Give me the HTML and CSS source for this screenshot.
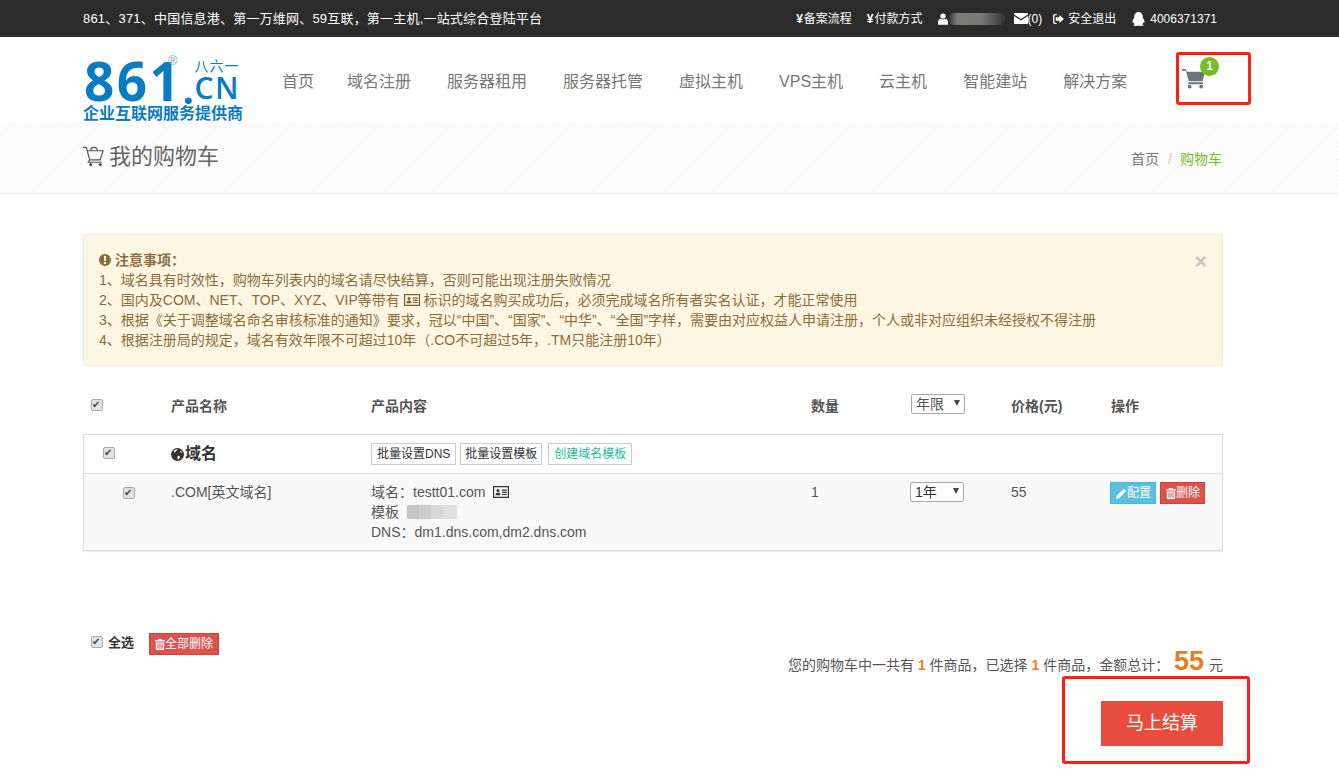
FILE: index.html
```html
<!DOCTYPE html>
<html lang="zh-CN">
<head>
    <meta charset="UTF-8">
    <meta name="viewport" content="width=device-width, initial-scale=1.0">
    <title>我的购物车</title>
    <link rel="stylesheet" href="styles.css">
</head>
<body>
    <svg class="sprite" width="0" height="0">
        <symbol id="i-cart" viewBox="0 0 24 22"><path d="M0 1h4l1 3h19l-2.500 10H7L4 3H0z M7 15h15v2H6z"/><circle cx="8" cy="19.500" r="2"/><circle cx="20" cy="19.500" r="2"/></symbol>
        <symbol id="i-user" viewBox="0 0 12 14"><circle cx="6" cy="3.500" r="3.200"/><path d="M0 14v-3c0-2.500 1.500-4 3-4.300 1.800 1.200 4.200 1.200 6 0 1.500.3 3 1.800 3 4.300v3z"/></symbol>
        <symbol id="i-mail" viewBox="0 0 14 11"><path d="M1 0h12a1 1 0 0 1 1 1v.5L7 6 0 1.500V1a1 1 0 0 1 1-1zM0 3l7 4.500L14 3v7a1 1 0 0 1-1 1H1a1 1 0 0 1-1-1z"/></symbol>
        <symbol id="i-out" viewBox="0 0 12 11"><path d="M4 0v1.500H2a.6.6 0 0 0-.5.500v7c0 .3.200.500.500.500h2V11H2a2 2 0 0 1-2-2V2a2 2 0 0 1 2-2z"/><path d="M7 1l5 4.500L7 10V7.500H3v-4h4z"/></symbol>
        <symbol id="i-qq" viewBox="0 0 14 15"><path d="M7 0c3 0 4.600 2.300 4.600 5v1.200c1 1.300 1.900 3 1.900 4.600 0 1-.4 1.200-1.200.3-.3 1-.8 1.600-1.300 2 1 .3 1.500.7 1.500 1.100 0 .5-1.500.8-3 .8-1 0-2-.2-2.500-.5-.5.3-1.500.5-2.500.5-1.500 0-3-.3-3-.8 0-.4.500-.8 1.500-1.100-.5-.4-1-1-1.300-2-.8.9-1.200.7-1.200-.3 0-1.600.9-3.300 1.900-4.600V5C2.400 2.300 4 0 7 0z"/></symbol>
        <symbol id="i-globe" viewBox="0 0 14 14"><circle cx="7" cy="7" r="7"/><path fill="#fff" d="M3 3c1-1 2.500-1.700 3.800-1.600.3.600-.2 1.100-.8 1.300-.7.300-.4 1-1.100 1.200-.7.200-.8.900-.3 1.300-.7-.1-1.300-.6-1.600-1.100-.2-.4-.2-.800 0-1.100zM8.500 8.300c.6.500 1.300.6 1.200 1.500-.1.800-.9 1.300-1.200 2.100-.3.500-.7.600-1.100.4-.3-.8-.1-1.500-.5-2.200-.3-.7.600-1.900 1.600-1.800zM10 2.600c1 .6 1.800 1.500 2.200 2.600-.7.200-1.300-.2-1.700-.7-.4-.5-.8-1.100-.5-1.900z"/></symbol>
        <symbol id="i-card" viewBox="0 0 16 12"><path fill-rule="evenodd" d="M0 0h16v12H0zM1.200 1.200v9.600h13.600V1.200z"/><circle cx="5" cy="4.600" r="1.500"/><path d="M2.500 9.200c0-1.800 1-2.800 2.500-2.800s2.500 1 2.500 2.800zM9 3.500h4.800v1.200H9zM9 5.700h4.800v1.200H9zM9 7.900h4.800v1.200H9z"/></symbol>
        <symbol id="i-pencil" viewBox="0 0 12 12"><path d="M8.500 0.800l2.700 2.700-7.500 7.500L0 12l1-3.700zM9.300 0l2.700 2.700"/></symbol>
        <symbol id="i-trash" viewBox="0 0 12 13"><path fill-rule="evenodd" d="M4 0h4l1 1.500h3V3H0V1.500h3zM1 4h10v8a1 1 0 0 1-1 1H2a1 1 0 0 1-1-1zM3 5.200v6.500h1.200V5.200zM5.400 5.200v6.500h1.200V5.200zM7.800 5.200v6.500H9V5.200z"/></symbol>
        <symbol id="i-warn" viewBox="0 0 12 12"><path fill-rule="evenodd" d="M6 0a6 6 0 1 0 0 12A6 6 0 0 0 6 0zM4.900 2h2.200l-.3 5H5.200zM4.900 8h2.200v2H4.900z"/></symbol>
        <symbol id="i-cart-line" viewBox="0 0 22 21"><path fill="none" stroke="currentColor" stroke-width="1.200" d="M0 1h3.500l3.500 13h11l3-9.500H5M7 14l-1.500 2.500h14M8 4.500c0-2 1.500-3.500 3.500-3.500s3.500 1.500 3.500 3.500"/><circle cx="8" cy="19" r="1.600"/><circle cx="18" cy="19" r="1.600"/></symbol>
    </svg>

    <div class="topbar">
        <div class="topbar-title">861、371、中国信息港、第一万维网、59互联，第一主机,一站式综合登陆平台</div>
        <div class="topbar-links">
            <a class="bold-link"><b>¥</b>备案流程</a>
            <a class="bold-link"><b>¥</b>付款方式</a>
            <span class="user"><svg class="ico i-user"><use href="#i-user"/></svg><span class="blur-name"></span></span>
            <span class="mail"><svg class="ico i-mail"><use href="#i-mail"/></svg>(0)</span>
            <a class="logout"><svg class="ico i-out"><use href="#i-out"/></svg>安全退出</a>
            <span class="qq"><svg class="ico i-qq"><use href="#i-qq"/></svg>4006371371</span>
        </div>
    </div>

    <header class="header">
        <div class="logo">
            <div class="logo-top">
                <span class="logo-num">861</span>
                <span class="logo-reg">®</span>
                <span class="logo-dot">.</span>
                <div class="logo-side">
                    <span class="logo-cn">八六一</span>
                    <span class="logo-en">CN</span>
                </div>
            </div>
            <div class="logo-slogan">企业互联网服务提供商</div>
        </div>
        <nav class="nav">
            <a>首页</a>
            <a>域名注册</a>
            <a>服务器租用</a>
            <a>服务器托管</a>
            <a>虚拟主机</a>
            <a>VPS主机</a>
            <a>云主机</a>
            <a>智能建站</a>
            <a>解决方案</a>
        </nav>
        <div class="cart">
            <svg class="ico i-cart"><use href="#i-cart"/></svg>
            <span class="cart-badge">1</span>
        </div>
    </header>

    <div class="crumbs">
        <h1 class="page-title"><svg class="ico i-cart-line"><use href="#i-cart-line"/></svg>我的购物车</h1>
        <div class="crumb-links"><a>首页</a><span class="sep">/</span><span class="current">购物车</span></div>
    </div>

    <main class="main">
        <div class="notice">
            <span class="notice-close">×</span>
            <div class="notice-title"><svg class="ico i-warn"><use href="#i-warn"/></svg>注意事项：</div>
            <div>1、域名具有时效性，购物车列表内的域名请尽快结算，否则可能出现注册失败情况</div>
            <div>2、国内及COM、NET、TOP、XYZ、VIP等带有 <svg class="ico i-card"><use href="#i-card"/></svg> 标识的域名购买成功后，必须完成域名所有者实名认证，才能正常使用</div>
            <div>3、根据《关于调整域名命名审核标准的通知》要求，冠以“中国”、“国家”、“中华”、“全国”字样，需要由对应权益人申请注册，个人或非对应组织未经授权不得注册</div>
            <div>4、根据注册局的规定，域名有效年限不可超过10年（.CO不可超过5年，.TM只能注册10年）</div>
        </div>

        <div class="row table-head">
            <div class="cell-check"><input type="checkbox" checked></div>
            <div>产品名称</div>
            <div>产品内容</div>
            <div>数量</div>
            <div><span class="select-wrap"><select class="select-head"><option>年限</option></select></span></div>
            <div>价格(元)</div>
            <div>操作</div>
        </div>

        <div class="group">
            <div class="row group-head">
                <div class="cell-check indent-1"><input type="checkbox" checked></div>
                <div class="group-name"><svg class="ico i-globe"><use href="#i-globe"/></svg>域名</div>
                <div class="group-btns">
                    <a class="btn-line btn-wide">批量设置DNS</a>
                    <a class="btn-line">批量设置模板</a>
                    <a class="btn-line btn-green">创建域名模板</a>
                </div>
            </div>
            <div class="row group-item">
                <div class="cell-check indent-2"><input type="checkbox" checked></div>
                <div>.COM[英文域名]</div>
                <div class="item-info">
                    <div>域名：testt01.com <svg class="ico i-card"><use href="#i-card"/></svg></div>
                    <div class="tpl">模板<span class="blur-tpl"></span></div>
                    <div>DNS：dm1.dns.com,dm2.dns.com</div>
                </div>
                <div>1</div>
                <div><span class="select-wrap"><select class="select-year"><option>1年</option></select></span></div>
                <div>55</div>
                <div class="item-ops">
                    <a class="btn-sm btn-info"><svg class="ico i-pencil"><use href="#i-pencil"/></svg>配置</a>
                    <a class="btn-sm btn-danger"><svg class="ico i-trash"><use href="#i-trash"/></svg>删除</a>
                </div>
            </div>
        </div>

        <div class="foot">
            <div class="foot-left">
                <input type="checkbox" checked>
                <span class="check-all">全选</span>
                <a class="btn-sm btn-danger btn-all"><svg class="ico i-trash"><use href="#i-trash"/></svg>全部删除</a>
            </div>
            <div class="foot-right">
                <div class="summary">您的购物车中一共有 <b>1</b> 件商品，已选择 <b>1</b> 件商品，金额总计： <b class="total">55</b> 元</div>
                <a class="checkout">马上结算</a>
            </div>
        </div>
    </main>

    <!-- red boxes drawn on the screenshot -->
    <div class="mark mark-cart"></div>
    <div class="mark mark-pay"></div>
</body>
</html>
```

FILE: styles.css
```css
/* General Styles */
* {
    box-sizing: border-box;
}

html, body {
    margin: 0;
    height: 780px;
    overflow: hidden;
}

body {
    position: relative;
    background-color: #fff;
    color: #555;
    font-family: "Liberation Sans", "Noto Sans CJK SC", sans-serif;
    font-size: 14px;
    line-height: 20px;
}

.sprite {
    position: absolute;
}

.ico {
    fill: currentColor;
    display: inline-block;
}

/* Top bar */
.topbar {
    height: 37px;
    padding: 0 122px 0 83px;
    display: flex;
    justify-content: space-between;
    align-items: center;
    background-color: #2b2b2b;
    color: #fff;
    font-size: 13px;
}

.topbar-title {
    letter-spacing: 0.2px;
}

.topbar-links {
    display: flex;
    align-items: center;
    font-size: 12px;
}

.topbar-links > * {
    display: flex;
    align-items: center;
}

.bold-link {
    margin-right: 15px;
}

.bold-link b {
    margin-right: 1px;
}

.i-user { width: 10px; height: 12px; margin-right: 1px; }
.i-mail { width: 14px; height: 11px; }
.i-out { width: 11px; height: 10px; margin-right: 4px; }
.i-qq { width: 13px; height: 14px; margin-right: 5px; }

.blur-name {
    width: 56px;
    height: 12px;
    border-radius: 5px;
    background: linear-gradient(90deg, #3a3a3a, #7d7d78 15%, #777 60%, #444 90%, #333);
}

.mail { margin-left: 9px; }
.logout { margin-left: 11px; }
.qq { margin-left: 16px; }

/* Header */
.header {
    height: 85px;
    padding-left: 83px;
    display: flex;
    align-items: flex-start;
}

.logo {
    width: 196px;
    padding-top: 22px;
    color: #0a7cc1;
}

.logo-top {
    position: relative;
    display: flex;
    height: 44px;
}

.logo-num {
    padding-left: 1px;
    font-family: "Open Sans", sans-serif;
    font-weight: 700;
    font-size: 53px;
    line-height: 44px;
    letter-spacing: 2.5px;
}

.logo-reg {
    position: absolute;
    left: 85px;
    top: -4px;
    font-size: 13px;
    line-height: 12px;
    color: #6db0dc;
}

.logo-dot {
    font-family: "Open Sans", sans-serif;
    font-weight: 700;
    font-size: 40px;
    line-height: 44px;
    margin-top: 8px;
    height: 36px;
    width: 12px;
}

.logo-side {
    display: flex;
    flex-direction: column;
    width: 46px;
    margin-top: -1px;
}

.logo-cn {
    font-size: 14px;
    line-height: 16px;
    letter-spacing: 1px;
}

.logo-en {
    font-family: "Open Sans", sans-serif;
    font-weight: 600;
    font-size: 30px;
    line-height: 28px;
    letter-spacing: 1.5px;
}

.logo-slogan {
    font-size: 16px;
    line-height: 18px;
    font-weight: 700;
    white-space: nowrap;
    width: 162px;
    margin-top: 2px;
}

.nav {
    display: flex;
    gap: 36px;
    width: 897px;
    padding-top: 35px;
    font-size: 16px;
    line-height: 20px;
    color: #777;
}

.nav a:first-child {
    margin: 0 -3px 0 3px;
}

.cart {
    position: relative;
    margin: 31px 0 0 6px;
    width: 40px;
    color: #6c757d;
}

.i-cart {
    width: 23px;
    height: 21px;
}

.cart-badge {
    position: absolute;
    left: 18px;
    top: -11px;
    width: 19px;
    height: 19px;
    border-radius: 50%;
    background-color: #76bb2a;
    color: #fff;
    font-size: 12px;
    font-weight: 700;
    line-height: 19px;
    text-align: center;
}

/* Breadcrumb band */
.crumbs {
    height: 72px;
    padding: 0 117px 0 83px;
    display: flex;
    justify-content: space-between;
    align-items: center;
    border-bottom: 1px solid #eee;
    background-color: #fafafa;
    background-image: repeating-linear-gradient(135deg, #f9f9f9 0, #f9f9f9 1px, #fcfcfc 1px, #fcfcfc 3px);
}

.page-title {
    margin: 0 0 2px;
    display: flex;
    align-items: center;
    font-size: 22px;
    font-weight: 400;
    line-height: 28px;
    color: #666;
}

.i-cart-line {
    width: 21px;
    height: 21px;
    margin-right: 5px;
    color: #555;
}

.crumb-links {
    color: #777;
    font-size: 14px;
    padding-top: 2px;
}

.crumb-links .sep {
    color: #ccc;
    margin: 0 8px 0 9px;
}

.crumb-links .current {
    color: #76bb2a;
}

/* Main */
.main {
    width: 1140px;
    margin: 40px 0 0 83px;
}

.notice {
    position: relative;
    height: 132px;
    padding: 15px;
    border: 1px solid #faebcc;
    background-color: #fdf6e3;
    color: #8a6d3b;
}

.notice-title {
    font-weight: 700;
}

.i-warn {
    width: 12px;
    height: 12px;
    margin-right: 4px;
    vertical-align: -1px;
}

.i-card {
    width: 16px;
    height: 12px;
    vertical-align: -1px;
    color: #333;
}

.notice .i-card {
    color: #7a6030;
}

.item-info .i-card {
    margin-left: 4px;
}

.notice-close {
    position: absolute;
    right: 15px;
    top: 17px;
    color: #c9c5b8;
    font-size: 22px;
    font-weight: 700;
    line-height: 20px;
}

.row {
    display: grid;
    grid-template-columns: 88px 200px 440px 100px 100px 100px 1fr;
}

.table-head {
    margin-top: 24px;
    height: 32px;
    align-items: center;
    font-weight: 700;
}

input[type="checkbox"] {
    appearance: none;
    position: relative;
    display: block;
    width: 12px;
    height: 12px;
    margin: 0;
    border: 1px solid #aaa;
    border-radius: 2px;
    background-color: #e2e2e2;
}

input[type="checkbox"]::after {
    content: "✔";
    position: absolute;
    left: 0;
    top: 0;
    color: #444;
    font-family: "DejaVu Sans", sans-serif;
    font-size: 10px;
    line-height: 10px;
}

.cell-check input {
    margin-left: 8px;
    margin-bottom: 3px;
}

.select-wrap {
    position: relative;
    display: inline-block;
}

.select-wrap::after {
    content: "";
    position: absolute;
    right: 5px;
    top: 6px;
    border-left: 3.5px solid transparent;
    border-right: 3.5px solid transparent;
    border-top: 6px solid #444;
    pointer-events: none;
}

select {
    appearance: none;
    display: block;
    width: 54px;
    height: 20px;
    padding: 0 4px;
    border: 1px solid #aaa;
    border-radius: 2px;
    background-color: #fff;
    color: #555;
    font: 14px/18px "Liberation Sans", "Noto Sans CJK SC", sans-serif;
}

.select-head {
    margin-bottom: 5px;
}

.select-year {
    margin-left: -1px;
    color: #333;
}

/* Product group */
.group {
    margin-top: 12px;
    border: 1px solid #ddd;
    box-shadow: 0 1px 1px #eee;
}

.group .row {
    grid-template-columns: 87px 200px 440px 100px 100px 100px 1fr;
}

.group-head {
    height: 39px;
    align-items: center;
    border-bottom: 1px solid #ddd;
    background-color: #fff;
}

.indent-1 input { margin-left: 19px; }
.indent-2 input { margin-left: 39px; margin-top: 5px; }

.group-name {
    display: flex;
    align-items: center;
    color: #333;
    font-size: 16px;
    font-weight: 700;
}

.i-globe {
    width: 13px;
    height: 13px;
    margin-right: 1px;
}

.group-btns {
    grid-column: span 5;
    display: flex;
    gap: 4px;
}

.btn-line {
    height: 22px;
    padding: 0 4px;
    border: 1px solid #ccc;
    color: #333;
    font-size: 12px;
    line-height: 20px;
}

.btn-wide {
    padding: 0 5px;
}

.btn-green {
    margin-left: 2px;
    padding: 0 5px;
    color: #1abc9c;
}

.group-item {
    height: 76px;
    padding-top: 8px;
    background-color: #f9f9f9;
}

.tpl {
    display: flex;
}

.blur-tpl {
    width: 50px;
    height: 14px;
    margin: 3px 0 0 8px;
    background: linear-gradient(90deg, #c8c4c3 0 24%, #cdcbcb 24% 48%, #d6d6d6 48% 72%, #e0e0e0 72%);
}

.item-ops {
    display: flex;
    gap: 4px;
    align-items: flex-start;
    margin-left: -1px;
}

.btn-sm {
    height: 22px;
    display: inline-flex;
    align-items: center;
    padding: 0 4px 0 5px;
    border: 1px solid transparent;
    color: #fff;
    font-size: 12px;
    white-space: nowrap;
}

.btn-info {
    background-color: #5bc0de;
    border-color: #46b8da;
}

.btn-danger {
    background-color: #d9534f;
    border-color: #d43f3a;
}

.i-pencil { width: 11px; height: 11px; }
.i-trash { width: 10px; height: 11px; }

/* Footer of the cart */
.foot {
    margin-top: 82px;
    display: flex;
    justify-content: space-between;
}

.foot-left {
    display: flex;
    align-items: center;
    height: 22px;
    padding-left: 8px;
}

.check-all {
    margin: 0 15px 2px 5px;
    color: #333;
    font-size: 13px;
    font-weight: 700;
}

.btn-all {
    padding: 0 5px;
}

.foot-left input {
    margin-bottom: 4px;
}

.foot-right {
    display: flex;
    flex-direction: column;
    align-items: flex-end;
}

.summary {
    margin-top: 12px;
    height: 30px;
    line-height: 32px;
    color: #555;
    white-space: nowrap;
}

.summary b {
    color: #e67e22;
}

.summary .total {
    font-size: 27px;
    margin: 0 1px;
}

.checkout {
    margin-top: 26px;
    width: 122px;
    height: 45px;
    background-color: #e74c3c;
    color: #fff;
    font-size: 18px;
    line-height: 45px;
    text-align: center;
}

/* Annotation boxes */
.mark {
    position: absolute;
    border: 3px solid #ff2015;
    border-radius: 3px;
}

.mark-cart {
    left: 1176px;
    top: 52px;
    width: 75px;
    height: 53px;
}

.mark-pay {
    left: 1062px;
    top: 676px;
    width: 188px;
    height: 88px;
}
```
